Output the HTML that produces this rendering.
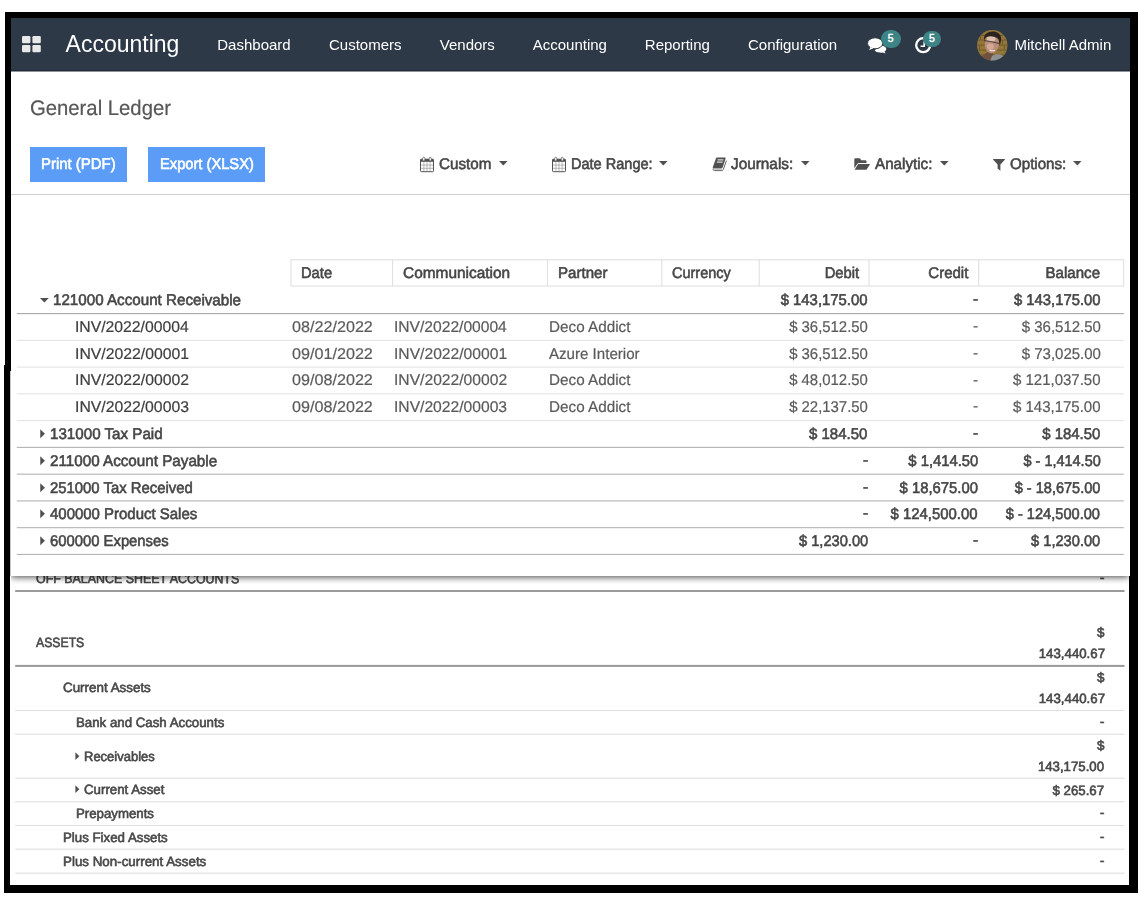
<!DOCTYPE html>
<html lang="en">
<head>
<meta charset="utf-8">
<title>General Ledger - Accounting</title>
<style>
html,body{margin:0;padding:0;background:#fff;}
body{width:1140px;height:900px;position:relative;overflow:hidden;font-family:"Liberation Sans",sans-serif;}
.abs{position:absolute;}
.blk{position:absolute;background:#000;}
.t{position:absolute;white-space:pre;line-height:1;font-family:"Liberation Sans",sans-serif;}
.ln{position:absolute;height:1px;}
.txt{position:absolute;left:0;top:0;width:1140px;height:900px;filter:blur(0.3px);}
.hd{position:absolute;top:260px;height:26px;border:1px solid #e2e2e2;box-sizing:border-box;background:#fff;}
svg{position:absolute;overflow:visible;}
</style>
</head>
<body>

<!-- ============ LOWER SCREENSHOT (balance sheet) ============ -->
<div id="lower" class="abs" style="left:0;top:0;width:1140px;height:900px;">
  <div class="blk" style="left:4px;top:365px;width:6px;height:528px;"></div>
  <div class="blk" style="left:1129px;top:570px;width:9px;height:323px;"></div>
  <div class="blk" style="left:4px;top:885px;width:1134px;height:8px;"></div>
<svg style="left:0;top:0;" width="1140" height="900">
<rect x="15.2" y="590.00" width="1109.3" height="2" fill="#9a9a9a"/>
<rect x="15.2" y="664.90" width="1109.3" height="2" fill="#9a9a9a"/>
<rect x="15.2" y="709.95" width="1109.3" height="1.1" fill="#e0e0e0"/>
<rect x="15.2" y="733.65" width="1109.3" height="1.1" fill="#e0e0e0"/>
<rect x="15.2" y="777.65" width="1109.3" height="1.1" fill="#e0e0e0"/>
<rect x="15.2" y="801.25" width="1109.3" height="1.1" fill="#e0e0e0"/>
<rect x="15.2" y="824.95" width="1109.3" height="1.1" fill="#e0e0e0"/>
<rect x="15.2" y="848.65" width="1109.3" height="1.1" fill="#e0e0e0"/>
<rect x="15.2" y="872.65" width="1109.3" height="1.1" fill="#e0e0e0"/>
</svg>
  <!-- carets -->
  <svg style="left:74.9px;top:751.7px;" width="4.8" height="8.4" viewBox="0 0 5 9"><path d="M0.3 0.3 L4.6 4.5 L0.3 8.7 Z" fill="#505050"/></svg>
  <svg style="left:74.9px;top:785.4px;" width="4.8" height="8.4" viewBox="0 0 5 9"><path d="M0.3 0.3 L4.6 4.5 L0.3 8.7 Z" fill="#505050"/></svg>
<div class="txt">
<span class="t" style="top:571.95px;font-size:13.4px;color:#484848;-webkit-text-stroke:0.6px #484848;left:35.51px;transform-origin:0 11.35px;transform:rotate(0.05deg) scaleX(0.9275);">OFF BALANCE SHEET ACCOUNTS</span>
<span class="t" style="top:570.95px;font-size:13.4px;color:#484848;-webkit-text-stroke:0.6px #484848;right:35.10px;transform-origin:100% 11.35px;transform:rotate(0.05deg);">-</span>
<span class="t" style="top:636.35px;font-size:13.4px;color:#484848;-webkit-text-stroke:0.6px #484848;left:36.08px;transform-origin:0 11.35px;transform:rotate(0.05deg) scaleX(0.9137);">ASSETS</span>
<span class="t" style="top:625.75px;font-size:13.4px;color:#484848;-webkit-text-stroke:0.6px #484848;right:35.48px;transform-origin:100% 11.35px;transform:rotate(0.05deg);">$</span>
<span class="t" style="top:646.75px;font-size:13.4px;color:#484848;-webkit-text-stroke:0.6px #484848;right:35.43px;transform-origin:100% 11.35px;transform:rotate(0.05deg) scaleX(0.9887);">143,440.67</span>
<span class="t" style="top:681.15px;font-size:13.4px;color:#484848;-webkit-text-stroke:0.6px #484848;left:62.72px;transform-origin:0 11.35px;transform:rotate(0.05deg);">Current Assets</span>
<span class="t" style="top:671.25px;font-size:13.4px;color:#484848;-webkit-text-stroke:0.6px #484848;right:35.48px;transform-origin:100% 11.35px;transform:rotate(0.05deg);">$</span>
<span class="t" style="top:691.75px;font-size:13.4px;color:#484848;-webkit-text-stroke:0.6px #484848;right:35.43px;transform-origin:100% 11.35px;transform:rotate(0.05deg) scaleX(0.9887);">143,440.67</span>
<span class="t" style="top:715.55px;font-size:13.4px;color:#484848;-webkit-text-stroke:0.6px #484848;left:76.01px;transform-origin:0 11.35px;transform:rotate(0.05deg) scaleX(0.9909);">Bank and Cash Accounts</span>
<span class="t" style="top:714.55px;font-size:13.4px;color:#484848;-webkit-text-stroke:0.6px #484848;right:35.10px;transform-origin:100% 11.35px;transform:rotate(0.05deg);">-</span>
<span class="t" style="top:749.75px;font-size:13.4px;color:#484848;-webkit-text-stroke:0.6px #484848;left:83.93px;transform-origin:0 11.35px;transform:rotate(0.05deg) scaleX(0.9710);">Receivables</span>
<span class="t" style="top:739.25px;font-size:13.4px;color:#484848;-webkit-text-stroke:0.6px #484848;right:35.48px;transform-origin:100% 11.35px;transform:rotate(0.05deg);">$</span>
<span class="t" style="top:759.55px;font-size:13.4px;color:#484848;-webkit-text-stroke:0.6px #484848;right:35.58px;transform-origin:100% 11.35px;transform:rotate(0.05deg) scaleX(0.9865);">143,175.00</span>
<span class="t" style="top:783.45px;font-size:13.4px;color:#484848;-webkit-text-stroke:0.6px #484848;left:84.33px;transform-origin:0 11.35px;transform:rotate(0.05deg) scaleX(0.9907);">Current Asset</span>
<span class="t" style="top:783.55px;font-size:13.4px;color:#484848;-webkit-text-stroke:0.6px #484848;right:35.43px;transform-origin:100% 11.35px;transform:rotate(0.05deg) scaleX(0.9921);">$ 265.67</span>
<span class="t" style="top:807.15px;font-size:13.4px;color:#484848;-webkit-text-stroke:0.6px #484848;left:76.01px;transform-origin:0 11.35px;transform:rotate(0.05deg) scaleX(0.9881);">Prepayments</span>
<span class="t" style="top:806.15px;font-size:13.4px;color:#484848;-webkit-text-stroke:0.6px #484848;right:35.10px;transform-origin:100% 11.35px;transform:rotate(0.05deg);">-</span>
<span class="t" style="top:830.75px;font-size:13.4px;color:#484848;-webkit-text-stroke:0.6px #484848;left:62.81px;transform-origin:0 11.35px;transform:rotate(0.05deg) scaleX(0.9913);">Plus Fixed Assets</span>
<span class="t" style="top:829.75px;font-size:13.4px;color:#484848;-webkit-text-stroke:0.6px #484848;right:35.10px;transform-origin:100% 11.35px;transform:rotate(0.05deg);">-</span>
<span class="t" style="top:854.55px;font-size:13.4px;color:#484848;-webkit-text-stroke:0.6px #484848;left:62.80px;transform-origin:0 11.35px;transform:rotate(0.05deg) scaleX(0.9975);">Plus Non-current Assets</span>
<span class="t" style="top:853.55px;font-size:13.4px;color:#484848;-webkit-text-stroke:0.6px #484848;right:35.10px;transform-origin:100% 11.35px;transform:rotate(0.05deg);">-</span>
</div>
</div>

<!-- ============ UPPER SCREENSHOT (general ledger) ============ -->
<div id="shadowclip" class="abs" style="left:11px;top:576px;width:1118px;height:14px;overflow:hidden;">
  <div class="abs" style="left:0;top:-20px;width:1118px;height:20px;box-shadow:0 1px 7px 0 rgba(0,0,0,.75);"></div>
</div>
<div id="upper" class="abs" style="left:0;top:0;width:1140px;height:576px;">
  <div class="abs" style="left:11px;top:18px;width:1119px;height:558px;background:#fff;"></div>
  <div class="blk" style="left:5px;top:12px;width:1133px;height:6px;"></div>
  <div class="blk" style="left:5px;top:12px;width:6px;height:359px;"></div>
  <div class="blk" style="left:4px;top:365px;width:6px;height:211px;"></div>
  <div class="blk" style="left:1130px;top:12px;width:8px;height:564px;"></div>
  <div class="abs" style="left:10px;top:371px;width:1px;height:205px;background:#c4c4c4;"></div>

  <!-- navbar -->
  <svg id="nav" style="left:11px;top:18px;" width="1119" height="54"><rect x="0" y="0" width="1119" height="53.3" fill="#2e3947"/><rect x="0" y="52.2" width="1119" height="1.1" fill="#1f2835"/></svg>
  <svg style="left:22px;top:36px;" width="19" height="16" viewBox="0 0 19 16">
    <rect x="0" y="0" width="8.4" height="7.2" rx="1.3" fill="#e9e9e9"/>
    <rect x="10.4" y="0" width="8.4" height="7.2" rx="1.3" fill="#e9e9e9"/>
    <rect x="0" y="9" width="8.4" height="7.2" rx="1.3" fill="#e9e9e9"/>
    <rect x="10.4" y="9" width="8.4" height="7.2" rx="1.3" fill="#e9e9e9"/>
  </svg>
  <!-- chat icon -->
  <svg style="left:867px;top:37px;" width="20" height="17" viewBox="0 0 20 17">
    <path d="M13 8.6 C16.4 8.6 19.3 9.9 19.3 12.1 C19.3 13.2 18.5 14.1 17.4 14.7 L18.7 16.5 L15.4 15.4 C14.5 15.6 13.7 15.7 12.8 15.6 C10.4 15.6 8.6 14.8 7.6 13.6 Z" fill="#fff"/>
    <ellipse cx="8.1" cy="6.3" rx="7.6" ry="5.5" fill="#fff" stroke="#2e3947" stroke-width="1"/>
    <path d="M3.4 10 L2.2 12.9 L6.6 11.3 Z" fill="#fff"/>
  </svg>
  <div class="abs" style="left:880.5px;top:29.8px;width:20px;height:18.4px;border-radius:9.2px;background:#3d8486;"></div>
  <!-- clock icon -->
  <svg style="left:915px;top:37px;" width="16.4" height="16.4" viewBox="0 0 16.4 16.4">
    <circle cx="8.2" cy="8.2" r="7" fill="none" stroke="#fff" stroke-width="2.3"/>
    <path d="M9.2 4 V9.2 H5.6" fill="none" stroke="#fff" stroke-width="1.6"/>
  </svg>
  <div class="abs" style="left:923px;top:30.6px;width:18.4px;height:16.2px;border-radius:8.1px;background:#3d8486;"></div>
  <span class="t" style="left:887.7px;top:33.9px;font-size:10.4px;color:#fff;-webkit-text-stroke:0.45px #fff;">5</span>
  <span class="t" style="left:929.1px;top:33.7px;font-size:10.4px;color:#fff;-webkit-text-stroke:0.45px #fff;">5</span>
  <!-- avatar -->
  <svg style="left:977px;top:29.6px;" width="30.6" height="30.6" viewBox="0 0 30.6 30.6">
    <defs>
      <clipPath id="av"><circle cx="15.3" cy="15.3" r="15.3"/></clipPath>
      <filter id="avb" x="-20%" y="-20%" width="140%" height="140%"><feGaussianBlur stdDeviation="0.7"/></filter>
    </defs>
    <g clip-path="url(#av)">
      <rect width="30.6" height="30.6" fill="#93763a"/>
      <g filter="url(#avb)">
        <rect x="-1" y="4.8" width="33" height="1" fill="#6b5628"/>
        <rect x="-1" y="9.6" width="33" height="1" fill="#735c2b"/>
        <rect x="-1" y="14.6" width="33" height="1" fill="#735c2b"/>
        <rect x="-1" y="19.6" width="33" height="1" fill="#735c2b"/>
        <rect x="-1" y="24.4" width="33" height="1" fill="#7a622e"/>
        <rect x="3" y="5" width="1" height="5" fill="#735c2b"/><rect x="25" y="10" width="1" height="5" fill="#735c2b"/><rect x="2" y="15" width="1" height="5" fill="#735c2b"/><rect x="27" y="15" width="1" height="5" fill="#735c2b"/>
        <path d="M2 31 L5 26 L9.5 22.8 L14 21 L18 27 L16 31 Z" fill="#6f5140"/>
        <path d="M13 31 L15.2 25.8 L19 24.2 L23.5 24.6 L28 27.5 L28 31 Z" fill="#8f9292"/>
        <ellipse cx="15" cy="13.6" rx="7.2" ry="9.8" fill="#b98e78" transform="rotate(8 15 13.6)"/>
        <ellipse cx="14.2" cy="8.8" rx="4.4" ry="2.8" fill="#dcc0b0"/>
        <ellipse cx="13.4" cy="16.6" rx="3.6" ry="3.2" fill="#d3a994"/>
        <path d="M7 10 C6.4 4 11.5 1.2 16.5 1.6 C22 2 25 6 24 10.8 L22.8 15.4 L21.6 9.4 C19 6.4 12.5 5.2 9 7.2 Z" fill="#2a221f"/>
        <path d="M7 10.6 L13.5 11.5 L22.8 13.6" stroke="#3c3436" stroke-width="1.1" fill="none" opacity="0.8"/>
        <path d="M12.4 19.9 Q15 21.3 18 20.2" stroke="#efe4e1" stroke-width="1.1" fill="none"/>
      </g>
    </g>
  </svg>

  <!-- control panel -->
  <div class="abs" style="left:30px;top:147px;width:97px;height:34.6px;background:#5b9df6;"></div>
  <div class="abs" style="left:148px;top:147px;width:117px;height:34.6px;background:#5b9df6;"></div>
  <div class="ln" style="left:11px;width:1119px;top:194px;background:#cfcfcf;"></div>

  <!-- calendar icons -->
  <svg style="left:419.8px;top:156.5px;" width="14" height="15.2" viewBox="0 0 14 15.2">      <rect x="0.5" y="2.2" width="13" height="12.5" rx="0.9" fill="#fff" stroke="#505050" stroke-width="1"/><rect x="0.5" y="2.2" width="13" height="2.6" fill="#505050"/><path d="M0.9 8.1 H13.1 M0.9 11.3 H13.1 M3.9 5 V14.3 M7 5 V14.3 M10.1 5 V14.3" stroke="#8c8c8c" stroke-width="0.6" fill="none"/><rect x="2.7" y="0.3" width="2.1" height="3.6" rx="1" fill="#fff" stroke="#505050" stroke-width="0.7"/><rect x="9.2" y="0.3" width="2.1" height="3.6" rx="1" fill="#fff" stroke="#505050" stroke-width="0.7"/></svg>
  <svg style="left:552.2px;top:156.5px;" width="14" height="15.2" viewBox="0 0 14 15.2">      <rect x="0.5" y="2.2" width="13" height="12.5" rx="0.9" fill="#fff" stroke="#505050" stroke-width="1"/><rect x="0.5" y="2.2" width="13" height="2.6" fill="#505050"/><path d="M0.9 8.1 H13.1 M0.9 11.3 H13.1 M3.9 5 V14.3 M7 5 V14.3 M10.1 5 V14.3" stroke="#8c8c8c" stroke-width="0.6" fill="none"/><rect x="2.7" y="0.3" width="2.1" height="3.6" rx="1" fill="#fff" stroke="#505050" stroke-width="0.7"/><rect x="9.2" y="0.3" width="2.1" height="3.6" rx="1" fill="#fff" stroke="#505050" stroke-width="0.7"/></svg>
  <!-- book -->
  <svg style="left:712.3px;top:156.8px;" width="15" height="14.2" viewBox="0 0 15 14.2">
    <path d="M5.4 0.5 H12.9 Q13.9 0.5 13.6 1.5 L10.6 10.6 Q10.3 11.4 9.4 11.4 H1.6 Q0.4 11.4 0.8 10.3 L3.9 1.5 Q4.3 0.5 5.4 0.5 Z" fill="#505050"/>
    <path d="M5.6 2.9 H11.4 M4.9 5.1 H10.7" stroke="#fff" stroke-width="1" fill="none"/>
    <path d="M0.9 11.8 Q1 13.6 2.6 13.6 H9.8 Q10.9 13.6 11.3 12.5 L14.4 3.6" stroke="#505050" stroke-width="0.9" fill="none"/>
    <path d="M1.6 12.4 H10" stroke="#bbb" stroke-width="0.9" fill="none"/>
  </svg>
  <!-- folder open -->
  <svg style="left:854.2px;top:157.6px;" width="16" height="12" viewBox="0 0 16 12">
    <path d="M0.3 10.2 V1.4 Q0.3 0.3 1.4 0.3 H5.2 Q6.3 0.3 6.6 1.2 L7 2.3 H11.4 Q12.5 2.3 12.5 3.4 V5 H5 Q3.9 5 3.3 6 Z" fill="#505050"/>
    <path d="M4.6 6.1 H15.4 Q16.1 6.1 15.7 6.8 L12.8 11.2 Q12.4 11.8 11.6 11.8 H1 Q0.5 11.8 0.9 11.2 L3.7 6.7 Q4.1 6.1 4.6 6.1 Z" fill="#505050"/>
  </svg>
  <!-- filter -->
  <svg style="left:993.4px;top:158.7px;" width="12" height="12" viewBox="0 0 12 12">
    <path d="M0.2 0 H11.8 Q12.2 0.3 11.8 0.8 L7.4 5.6 V11.8 L4.6 9.4 V5.6 L0.2 0.8 Q-0.2 0.3 0.2 0 Z" fill="#505050"/>
  </svg>
  <!-- dropdown carets -->
  <svg style="left:498.8px;top:161.2px;" width="8.6" height="4.4" viewBox="0 0 8.6 4.4"><path d="M0 0 H8.6 L4.3 4.4 Z" fill="#505050"/></svg>
  <svg style="left:659.3px;top:161.2px;" width="8.6" height="4.4" viewBox="0 0 8.6 4.4"><path d="M0 0 H8.6 L4.3 4.4 Z" fill="#505050"/></svg>
  <svg style="left:801.3px;top:161.2px;" width="8.6" height="4.4" viewBox="0 0 8.6 4.4"><path d="M0 0 H8.6 L4.3 4.4 Z" fill="#505050"/></svg>
  <svg style="left:940px;top:161.2px;" width="8.6" height="4.4" viewBox="0 0 8.6 4.4"><path d="M0 0 H8.6 L4.3 4.4 Z" fill="#505050"/></svg>
  <svg style="left:1073.4px;top:161.2px;" width="8.6" height="4.4" viewBox="0 0 8.6 4.4"><path d="M0 0 H8.6 L4.3 4.4 Z" fill="#505050"/></svg>

  <!-- table header cells -->
  <svg style="left:0;top:0;" width="1140" height="300">
    <rect x="291" y="259.8" width="832.7" height="26.2" fill="#fff" stroke="#e0e0e0" stroke-width="1.1"/>
    <rect x="392.05" y="259.8" width="1.1" height="26.2" fill="#e0e0e0"/>
    <rect x="546.95" y="259.8" width="1.1" height="26.2" fill="#e0e0e0"/>
    <rect x="661.25" y="259.8" width="1.1" height="26.2" fill="#e0e0e0"/>
    <rect x="758.65" y="259.8" width="1.1" height="26.2" fill="#e0e0e0"/>
    <rect x="868.45" y="259.8" width="1.1" height="26.2" fill="#e0e0e0"/>
    <rect x="978.15" y="259.8" width="1.1" height="26.2" fill="#e0e0e0"/>
  </svg>

<svg style="left:0;top:0;" width="1140" height="576">
<rect x="16.8" y="313.05" width="1107" height="1.1" fill="#a6a6a6"/>
<rect x="16.8" y="339.81" width="1107" height="1.1" fill="#e4e4e4"/>
<rect x="16.8" y="366.57" width="1107" height="1.1" fill="#e4e4e4"/>
<rect x="16.8" y="393.33" width="1107" height="1.1" fill="#e4e4e4"/>
<rect x="16.8" y="420.09" width="1107" height="1.1" fill="#e4e4e4"/>
<rect x="16.8" y="446.85" width="1107" height="1.1" fill="#b4b4b4"/>
<rect x="16.8" y="473.61" width="1107" height="1.1" fill="#b4b4b4"/>
<rect x="16.8" y="500.37" width="1107" height="1.1" fill="#b4b4b4"/>
<rect x="16.8" y="527.13" width="1107" height="1.1" fill="#b4b4b4"/>
<rect x="16.8" y="553.89" width="1107" height="1.1" fill="#b4b4b4"/>
</svg>

  <!-- row carets -->
  <svg style="left:40.3px;top:298px;" width="8.8" height="4.6" viewBox="0 0 8.6 4.4"><path d="M0 0 H8.6 L4.3 4.4 Z" fill="#505050"/></svg>
  <svg style="left:40.2px;top:429.1px;" width="5.3" height="9.5" viewBox="0 0 5 9"><path d="M0.2 0.2 L4.7 4.5 L0.2 8.8 Z" fill="#505050"/></svg>
  <svg style="left:40.2px;top:455.9px;" width="5.3" height="9.5" viewBox="0 0 5 9"><path d="M0.2 0.2 L4.7 4.5 L0.2 8.8 Z" fill="#505050"/></svg>
  <svg style="left:40.2px;top:482.6px;" width="5.3" height="9.5" viewBox="0 0 5 9"><path d="M0.2 0.2 L4.7 4.5 L0.2 8.8 Z" fill="#505050"/></svg>
  <svg style="left:40.2px;top:509.4px;" width="5.3" height="9.5" viewBox="0 0 5 9"><path d="M0.2 0.2 L4.7 4.5 L0.2 8.8 Z" fill="#505050"/></svg>
  <svg style="left:40.2px;top:536.1px;" width="5.3" height="9.5" viewBox="0 0 5 9"><path d="M0.2 0.2 L4.7 4.5 L0.2 8.8 Z" fill="#505050"/></svg>
<div class="txt">
<span class="t" style="top:33.13px;font-size:23px;color:#fff;left:65.56px;transform-origin:0 19.47px;">Accounting</span>
<span class="t" style="top:37.10px;font-size:15px;color:#fff;left:217.27px;transform-origin:0 12.70px;">Dashboard</span>
<span class="t" style="top:37.10px;font-size:15px;color:#fff;left:328.97px;transform-origin:0 12.70px;">Customers</span>
<span class="t" style="top:37.10px;font-size:15px;color:#fff;left:439.81px;transform-origin:0 12.70px;">Vendors</span>
<span class="t" style="top:37.10px;font-size:15px;color:#fff;left:532.76px;transform-origin:0 12.70px;">Accounting</span>
<span class="t" style="top:37.10px;font-size:15px;color:#fff;left:644.84px;transform-origin:0 12.70px;">Reporting</span>
<span class="t" style="top:37.10px;font-size:15px;color:#fff;left:747.99px;transform-origin:0 12.70px;">Configuration</span>
<span class="t" style="top:37.10px;font-size:15px;color:#fff;left:1014.52px;transform-origin:0 12.70px;">Mitchell Admin</span>
<span class="t" style="top:97.22px;font-size:21.0px;color:#565656;-webkit-text-stroke:0.2px #565656;left:29.68px;transform-origin:0 17.78px;transform:rotate(0.05deg) scaleX(0.9659);">General Ledger</span>
<span class="t" style="top:156.38px;font-size:15.5px;color:#fff;-webkit-text-stroke:0.58px #fff;left:41.18px;transform-origin:0 13.12px;transform:rotate(0.05deg) scaleX(0.9632);">Print (PDF)</span>
<span class="t" style="top:156.38px;font-size:15.5px;color:#fff;-webkit-text-stroke:0.58px #fff;left:160.10px;transform-origin:0 13.12px;transform:rotate(0.05deg) scaleX(0.9470);">Export (XLSX)</span>
<span class="t" style="top:155.88px;font-size:15.5px;color:#464646;-webkit-text-stroke:0.58px #464646;left:439.03px;transform-origin:0 13.12px;transform:rotate(0.05deg) scaleX(0.9807);">Custom</span>
<span class="t" style="top:155.88px;font-size:15.5px;color:#464646;-webkit-text-stroke:0.58px #464646;left:570.61px;transform-origin:0 13.12px;transform:rotate(0.05deg) scaleX(0.9378);">Date Range:</span>
<span class="t" style="top:155.88px;font-size:15.5px;color:#464646;-webkit-text-stroke:0.58px #464646;left:731.46px;transform-origin:0 13.12px;transform:rotate(0.05deg) scaleX(0.9894);">Journals:</span>
<span class="t" style="top:155.88px;font-size:15.5px;color:#464646;-webkit-text-stroke:0.58px #464646;left:875.47px;transform-origin:0 13.12px;transform:rotate(0.05deg) scaleX(0.9799);">Analytic:</span>
<span class="t" style="top:155.88px;font-size:15.5px;color:#464646;-webkit-text-stroke:0.58px #464646;left:1010.08px;transform-origin:0 13.12px;transform:rotate(0.05deg) scaleX(0.9751);">Options:</span>
<span class="t" style="top:265.08px;font-size:15.5px;color:#464646;-webkit-text-stroke:0.58px #464646;left:301.19px;transform-origin:0 13.12px;transform:rotate(0.05deg) scaleX(0.9484);">Date</span>
<span class="t" style="top:265.08px;font-size:15.5px;color:#464646;-webkit-text-stroke:0.58px #464646;left:403.02px;transform-origin:0 13.12px;transform:rotate(0.05deg) scaleX(0.9944);">Communication</span>
<span class="t" style="top:265.08px;font-size:15.5px;color:#464646;-webkit-text-stroke:0.58px #464646;left:557.96px;transform-origin:0 13.12px;transform:rotate(0.05deg) scaleX(0.9733);">Partner</span>
<span class="t" style="top:265.08px;font-size:15.5px;color:#464646;-webkit-text-stroke:0.58px #464646;left:672.46px;transform-origin:0 13.12px;transform:rotate(0.05deg) scaleX(0.9344);">Currency</span>
<span class="t" style="top:265.08px;font-size:15.5px;color:#464646;-webkit-text-stroke:0.58px #464646;right:281.29px;transform-origin:100% 13.12px;transform:rotate(0.05deg) scaleX(0.9540);">Debit</span>
<span class="t" style="top:265.08px;font-size:15.5px;color:#464646;-webkit-text-stroke:0.58px #464646;right:171.29px;transform-origin:100% 13.12px;transform:rotate(0.05deg) scaleX(0.9689);">Credit</span>
<span class="t" style="top:265.08px;font-size:15.5px;color:#464646;-webkit-text-stroke:0.58px #464646;right:39.73px;transform-origin:100% 13.12px;transform:rotate(0.05deg) scaleX(0.9731);">Balance</span>
<span class="t" style="top:292.18px;font-size:15.5px;color:#464646;-webkit-text-stroke:0.58px #464646;left:52.54px;transform-origin:0 13.12px;transform:rotate(0.05deg) scaleX(0.9784);">121000 Account Receivable</span>
<span class="t" style="top:292.18px;font-size:15.5px;color:#464646;-webkit-text-stroke:0.58px #464646;right:272.22px;transform-origin:100% 13.12px;transform:rotate(0.05deg) scaleX(0.9594);">$ 143,175.00</span>
<span class="t" style="top:291.38px;font-size:15.5px;color:#464646;-webkit-text-stroke:0.58px #464646;right:161.71px;transform-origin:100% 13.12px;transform:rotate(0.05deg);">-</span>
<span class="t" style="top:292.18px;font-size:15.5px;color:#464646;-webkit-text-stroke:0.58px #464646;right:39.62px;transform-origin:100% 13.12px;transform:rotate(0.05deg) scaleX(0.9561);">$ 143,175.00</span>
<span class="t" style="top:318.94px;font-size:15.5px;color:#3e3e3e;-webkit-text-stroke:0.2px #3e3e3e;left:74.95px;transform-origin:0 13.12px;transform:rotate(0.05deg) scaleX(1.0149);">INV/2022/00004</span>
<span class="t" style="top:318.94px;font-size:15.5px;color:#5a5a5a;-webkit-text-stroke:0.2px #5a5a5a;left:291.97px;transform-origin:0 13.12px;transform:rotate(0.05deg) scaleX(1.0421);">08/22/2022</span>
<span class="t" style="top:318.94px;font-size:15.5px;color:#5a5a5a;-webkit-text-stroke:0.2px #5a5a5a;left:393.96px;transform-origin:0 13.12px;transform:rotate(0.05deg) scaleX(1.0067);">INV/2022/00004</span>
<span class="t" style="top:318.94px;font-size:15.5px;color:#5a5a5a;-webkit-text-stroke:0.2px #5a5a5a;left:549.45px;transform-origin:0 13.12px;transform:rotate(0.05deg) scaleX(0.9848);">Deco Addict</span>
<span class="t" style="top:318.94px;font-size:15.5px;color:#5a5a5a;-webkit-text-stroke:0.2px #5a5a5a;right:272.22px;transform-origin:100% 13.12px;transform:rotate(0.05deg) scaleX(0.9616);">$ 36,512.50</span>
<span class="t" style="top:318.14px;font-size:15.5px;color:#5a5a5a;-webkit-text-stroke:0.2px #5a5a5a;right:161.71px;transform-origin:100% 13.12px;transform:rotate(0.05deg);">-</span>
<span class="t" style="top:318.94px;font-size:15.5px;color:#5a5a5a;-webkit-text-stroke:0.2px #5a5a5a;right:39.41px;transform-origin:100% 13.12px;transform:rotate(0.05deg) scaleX(0.9665);">$ 36,512.50</span>
<span class="t" style="top:345.70px;font-size:15.5px;color:#3e3e3e;-webkit-text-stroke:0.2px #3e3e3e;left:74.94px;transform-origin:0 13.12px;transform:rotate(0.05deg) scaleX(1.0177);">INV/2022/00001</span>
<span class="t" style="top:345.70px;font-size:15.5px;color:#5a5a5a;-webkit-text-stroke:0.2px #5a5a5a;left:291.97px;transform-origin:0 13.12px;transform:rotate(0.05deg) scaleX(1.0421);">09/01/2022</span>
<span class="t" style="top:345.70px;font-size:15.5px;color:#5a5a5a;-webkit-text-stroke:0.2px #5a5a5a;left:393.96px;transform-origin:0 13.12px;transform:rotate(0.05deg) scaleX(1.0095);">INV/2022/00001</span>
<span class="t" style="top:345.70px;font-size:15.5px;color:#5a5a5a;-webkit-text-stroke:0.2px #5a5a5a;left:549.17px;transform-origin:0 13.12px;transform:rotate(0.05deg) scaleX(0.9735);">Azure Interior</span>
<span class="t" style="top:345.70px;font-size:15.5px;color:#5a5a5a;-webkit-text-stroke:0.2px #5a5a5a;right:272.22px;transform-origin:100% 13.12px;transform:rotate(0.05deg) scaleX(0.9616);">$ 36,512.50</span>
<span class="t" style="top:344.90px;font-size:15.5px;color:#5a5a5a;-webkit-text-stroke:0.2px #5a5a5a;right:161.71px;transform-origin:100% 13.12px;transform:rotate(0.05deg);">-</span>
<span class="t" style="top:345.70px;font-size:15.5px;color:#5a5a5a;-webkit-text-stroke:0.2px #5a5a5a;right:39.41px;transform-origin:100% 13.12px;transform:rotate(0.05deg) scaleX(0.9665);">$ 73,025.00</span>
<span class="t" style="top:372.46px;font-size:15.5px;color:#3e3e3e;-webkit-text-stroke:0.2px #3e3e3e;left:74.94px;transform-origin:0 13.12px;transform:rotate(0.05deg) scaleX(1.0179);">INV/2022/00002</span>
<span class="t" style="top:372.46px;font-size:15.5px;color:#5a5a5a;-webkit-text-stroke:0.2px #5a5a5a;left:291.97px;transform-origin:0 13.12px;transform:rotate(0.05deg) scaleX(1.0421);">09/08/2022</span>
<span class="t" style="top:372.46px;font-size:15.5px;color:#5a5a5a;-webkit-text-stroke:0.2px #5a5a5a;left:393.96px;transform-origin:0 13.12px;transform:rotate(0.05deg) scaleX(1.0097);">INV/2022/00002</span>
<span class="t" style="top:372.46px;font-size:15.5px;color:#5a5a5a;-webkit-text-stroke:0.2px #5a5a5a;left:549.45px;transform-origin:0 13.12px;transform:rotate(0.05deg) scaleX(0.9848);">Deco Addict</span>
<span class="t" style="top:372.46px;font-size:15.5px;color:#5a5a5a;-webkit-text-stroke:0.2px #5a5a5a;right:272.22px;transform-origin:100% 13.12px;transform:rotate(0.05deg) scaleX(0.9616);">$ 48,012.50</span>
<span class="t" style="top:371.66px;font-size:15.5px;color:#5a5a5a;-webkit-text-stroke:0.2px #5a5a5a;right:161.71px;transform-origin:100% 13.12px;transform:rotate(0.05deg);">-</span>
<span class="t" style="top:372.46px;font-size:15.5px;color:#5a5a5a;-webkit-text-stroke:0.2px #5a5a5a;right:39.41px;transform-origin:100% 13.12px;transform:rotate(0.05deg) scaleX(0.9672);">$ 121,037.50</span>
<span class="t" style="top:399.22px;font-size:15.5px;color:#3e3e3e;-webkit-text-stroke:0.2px #3e3e3e;left:74.95px;transform-origin:0 13.12px;transform:rotate(0.05deg) scaleX(1.0170);">INV/2022/00003</span>
<span class="t" style="top:399.22px;font-size:15.5px;color:#5a5a5a;-webkit-text-stroke:0.2px #5a5a5a;left:291.97px;transform-origin:0 13.12px;transform:rotate(0.05deg) scaleX(1.0421);">09/08/2022</span>
<span class="t" style="top:399.22px;font-size:15.5px;color:#5a5a5a;-webkit-text-stroke:0.2px #5a5a5a;left:393.96px;transform-origin:0 13.12px;transform:rotate(0.05deg) scaleX(1.0088);">INV/2022/00003</span>
<span class="t" style="top:399.22px;font-size:15.5px;color:#5a5a5a;-webkit-text-stroke:0.2px #5a5a5a;left:549.45px;transform-origin:0 13.12px;transform:rotate(0.05deg) scaleX(0.9848);">Deco Addict</span>
<span class="t" style="top:399.22px;font-size:15.5px;color:#5a5a5a;-webkit-text-stroke:0.2px #5a5a5a;right:272.22px;transform-origin:100% 13.12px;transform:rotate(0.05deg) scaleX(0.9616);">$ 22,137.50</span>
<span class="t" style="top:398.42px;font-size:15.5px;color:#5a5a5a;-webkit-text-stroke:0.2px #5a5a5a;right:161.71px;transform-origin:100% 13.12px;transform:rotate(0.05deg);">-</span>
<span class="t" style="top:399.22px;font-size:15.5px;color:#5a5a5a;-webkit-text-stroke:0.2px #5a5a5a;right:39.41px;transform-origin:100% 13.12px;transform:rotate(0.05deg) scaleX(0.9672);">$ 143,175.00</span>
<span class="t" style="top:425.98px;font-size:15.5px;color:#464646;-webkit-text-stroke:0.58px #464646;left:49.65px;transform-origin:0 13.12px;transform:rotate(0.05deg) scaleX(0.9777);">131000 Tax Paid</span>
<span class="t" style="top:425.98px;font-size:15.5px;color:#464646;-webkit-text-stroke:0.58px #464646;right:272.21px;transform-origin:100% 13.12px;transform:rotate(0.05deg) scaleX(0.9669);">$ 184.50</span>
<span class="t" style="top:425.18px;font-size:15.5px;color:#464646;-webkit-text-stroke:0.58px #464646;right:161.71px;transform-origin:100% 13.12px;transform:rotate(0.05deg);">-</span>
<span class="t" style="top:425.98px;font-size:15.5px;color:#464646;-webkit-text-stroke:0.58px #464646;right:39.62px;transform-origin:100% 13.12px;transform:rotate(0.05deg) scaleX(0.9635);">$ 184.50</span>
<span class="t" style="top:452.74px;font-size:15.5px;color:#464646;-webkit-text-stroke:0.58px #464646;left:50.04px;transform-origin:0 13.12px;transform:rotate(0.05deg) scaleX(0.9811);">211000 Account Payable</span>
<span class="t" style="top:451.94px;font-size:15.5px;color:#464646;-webkit-text-stroke:0.58px #464646;right:271.71px;transform-origin:100% 13.12px;transform:rotate(0.05deg);">-</span>
<span class="t" style="top:452.74px;font-size:15.5px;color:#464646;-webkit-text-stroke:0.58px #464646;right:162.22px;transform-origin:100% 13.12px;transform:rotate(0.05deg) scaleX(0.9546);">$ 1,414.50</span>
<span class="t" style="top:452.74px;font-size:15.5px;color:#464646;-webkit-text-stroke:0.58px #464646;right:39.63px;transform-origin:100% 13.12px;transform:rotate(0.05deg) scaleX(0.9334);">$ - 1,414.50</span>
<span class="t" style="top:479.50px;font-size:15.5px;color:#464646;-webkit-text-stroke:0.58px #464646;left:50.05px;transform-origin:0 13.12px;transform:rotate(0.05deg) scaleX(0.9597);">251000 Tax Received</span>
<span class="t" style="top:478.70px;font-size:15.5px;color:#464646;-webkit-text-stroke:0.58px #464646;right:271.71px;transform-origin:100% 13.12px;transform:rotate(0.05deg);">-</span>
<span class="t" style="top:479.50px;font-size:15.5px;color:#464646;-webkit-text-stroke:0.58px #464646;right:162.22px;transform-origin:100% 13.12px;transform:rotate(0.05deg) scaleX(0.9566);">$ 18,675.00</span>
<span class="t" style="top:479.50px;font-size:15.5px;color:#464646;-webkit-text-stroke:0.58px #464646;right:39.63px;transform-origin:100% 13.12px;transform:rotate(0.05deg) scaleX(0.9372);">$ - 18,675.00</span>
<span class="t" style="top:506.26px;font-size:15.5px;color:#464646;-webkit-text-stroke:0.58px #464646;left:50.46px;transform-origin:0 13.12px;transform:rotate(0.05deg) scaleX(0.9649);">400000 Product Sales</span>
<span class="t" style="top:505.46px;font-size:15.5px;color:#464646;-webkit-text-stroke:0.58px #464646;right:271.71px;transform-origin:100% 13.12px;transform:rotate(0.05deg);">-</span>
<span class="t" style="top:506.26px;font-size:15.5px;color:#464646;-webkit-text-stroke:0.58px #464646;right:162.22px;transform-origin:100% 13.12px;transform:rotate(0.05deg) scaleX(0.9605);">$ 124,500.00</span>
<span class="t" style="top:506.26px;font-size:15.5px;color:#464646;-webkit-text-stroke:0.58px #464646;right:39.63px;transform-origin:100% 13.12px;transform:rotate(0.05deg) scaleX(0.9424);">$ - 124,500.00</span>
<span class="t" style="top:533.02px;font-size:15.5px;color:#464646;-webkit-text-stroke:0.58px #464646;left:50.05px;transform-origin:0 13.12px;transform:rotate(0.05deg) scaleX(0.9563);">600000 Expenses</span>
<span class="t" style="top:533.02px;font-size:15.5px;color:#464646;-webkit-text-stroke:0.58px #464646;right:272.23px;transform-origin:100% 13.12px;transform:rotate(0.05deg) scaleX(0.9463);">$ 1,230.00</span>
<span class="t" style="top:532.22px;font-size:15.5px;color:#464646;-webkit-text-stroke:0.58px #464646;right:161.71px;transform-origin:100% 13.12px;transform:rotate(0.05deg);">-</span>
<span class="t" style="top:533.02px;font-size:15.5px;color:#464646;-webkit-text-stroke:0.58px #464646;right:39.63px;transform-origin:100% 13.12px;transform:rotate(0.05deg) scaleX(0.9449);">$ 1,230.00</span>
</div>
</div>
</body>
</html>
